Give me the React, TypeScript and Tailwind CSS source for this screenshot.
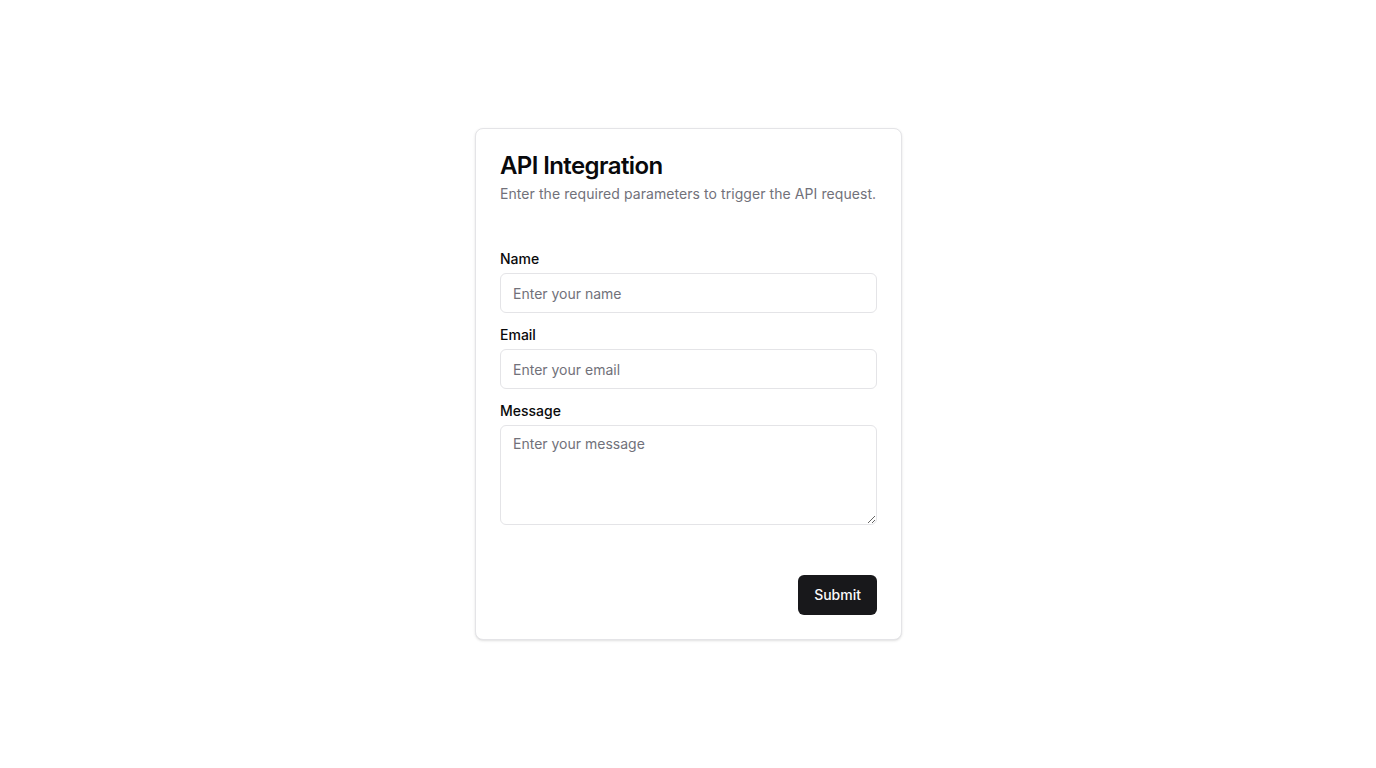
import React from "react";

export default function App() {
  return (
    <div
      className="min-h-screen w-full bg-white flex items-center justify-center pl-[1px]"
      style={{ fontFamily: "Inter, 'Noto Sans', sans-serif" }}
    >
      <div className="w-[427px] h-[512px] rounded-lg border border-[#e4e4e7] bg-white text-[#09090b] shadow-sm flex flex-col">
        <div className="flex flex-col gap-1.5 px-6 pt-[25px]">
          <h3 className="text-2xl font-semibold leading-none tracking-tight">API Integration</h3>
          <p className="text-sm text-[#71717a] tracking-[0.07px]">Enter the required parameters to trigger the API request.</p>
        </div>
        <form className="px-6 pt-[45px] flex flex-col gap-3" onSubmit={(e) => e.preventDefault()}>
          <div className="flex flex-col gap-1">
            <label className="text-sm font-medium text-[#09090b]">Name</label>
            <input
              className="h-10 w-full rounded-md border border-[#e4e4e7] bg-white px-3 py-2 text-sm placeholder:text-[#71717a] outline-none"
              placeholder="Enter your name"
            />
          </div>
          <div className="flex flex-col gap-1">
            <label className="text-sm font-medium text-[#09090b]">Email</label>
            <input
              className="h-10 w-full rounded-md border border-[#e4e4e7] bg-white px-3 py-2 text-sm placeholder:text-[#71717a] outline-none"
              placeholder="Enter your email"
            />
          </div>
          <div className="flex flex-col gap-1">
            <label className="text-sm font-medium text-[#09090b]">Message</label>
            <textarea
              className="h-[100px] w-full rounded-md border border-[#e4e4e7] bg-white px-3 py-2 text-sm placeholder:text-[#71717a] outline-none"
              placeholder="Enter your message"
            />
          </div>
        </form>
        <div className="flex justify-end px-6 pt-[50px]">
          <button className="h-10 rounded-md bg-[#18181b] px-4 text-sm font-medium text-[#fafafa]">Submit</button>
        </div>
      </div>
    </div>
  );
}
